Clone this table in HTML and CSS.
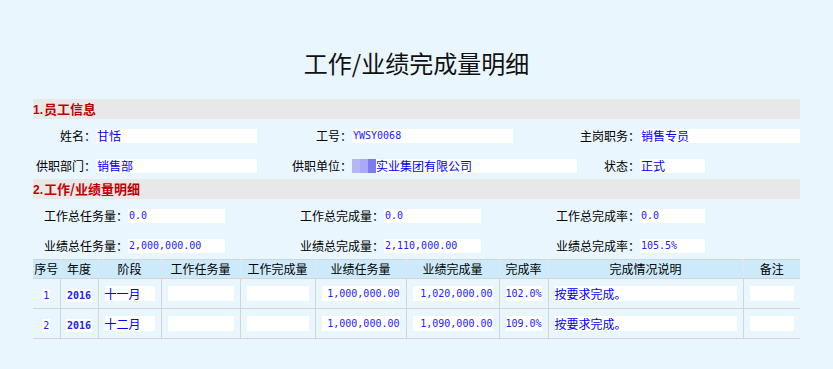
FILE: index.html
```html
<!DOCTYPE html>
<html lang="zh-CN">
<head>
<meta charset="utf-8">
<title>工作/业绩完成量明细</title>
<link rel="stylesheet" href="styles.css">
</head>
<body>
<div class="page">
  <h1 class="title">工作/业绩完成量明细</h1>

  <div class="bar"><span class="num">1.</span>员工信息</div>
  <div class="row">
    <div class="lbl w63">姓名：</div><div class="val w161 cjk">甘恬</div>
    <div class="lbl w95">工号：</div><div class="val w161 mono">YWSY0068</div>
    <div class="lbl w127">主岗职务：</div><div class="val w160 cjk">销售专员</div>
  </div>
  <div class="row">
    <div class="lbl w63">供职部门：</div><div class="val w161 cjk">销售部</div>
    <div class="lbl w95">供职单位：</div><div class="val w225 cjk"><span class="blur"></span>实业集团有限公司</div>
    <div class="lbl w63">状态：</div><div class="val w65 cjk">正式</div>
  </div>

  <div class="bar"><span class="num">2.</span>工作/业绩量明细</div>
  <div class="row">
    <div class="lbl w95">工作总任务量：</div><div class="val w97 mono">0.0</div>
    <div class="lbl w159">工作总完成量：</div><div class="val w97 mono">0.0</div>
    <div class="lbl w159">工作总完成率：</div><div class="val w65 mono">0.0</div>
  </div>
  <div class="row">
    <div class="lbl w95">业绩总任务量：</div><div class="val w97 mono">2,000,000.00</div>
    <div class="lbl w159">业绩总完成量：</div><div class="val w97 mono">2,110,000.00</div>
    <div class="lbl w159">业绩总完成率：</div><div class="val w65 mono">105.5%</div>
  </div>

  <table class="grid">
    <colgroup>
      <col class="c1"><col class="c2"><col class="c3"><col class="c4"><col class="c5">
      <col class="c6"><col class="c7"><col class="c8"><col class="c9"><col class="c10">
    </colgroup>
    <thead>
      <tr>
        <th>序号</th><th>年度</th><th>阶段</th><th>工作任务量</th><th>工作完成量</th>
        <th>业绩任务量</th><th>业绩完成量</th><th>完成率</th><th>完成情况说明</th><th>备注</th>
      </tr>
    </thead>
    <tbody>
      <tr>
        <td class="center"><span class="tag mono">1</span></td>
        <td class="center"><span class="tag mono bold">2016</span></td>
        <td><div class="box cjk">十一月</div></td>
        <td><div class="box"></div></td>
        <td><div class="box"></div></td>
        <td><div class="box mono right">1,000,000.00</div></td>
        <td><div class="box mono right">1,020,000.00</div></td>
        <td><div class="box mono right">102.0%</div></td>
        <td><div class="box cjk">按要求完成。</div></td>
        <td><div class="box"></div></td>
      </tr>
      <tr>
        <td class="center"><span class="tag mono">2</span></td>
        <td class="center"><span class="tag mono bold">2016</span></td>
        <td><div class="box cjk">十二月</div></td>
        <td><div class="box"></div></td>
        <td><div class="box"></div></td>
        <td><div class="box mono right">1,000,000.00</div></td>
        <td><div class="box mono right">1,090,000.00</div></td>
        <td><div class="box mono right">109.0%</div></td>
        <td><div class="box cjk">按要求完成。</div></td>
        <td><div class="box"></div></td>
      </tr>
    </tbody>
  </table>
</div>
</body>
</html>
```

FILE: styles.css
```css
html, body {
  margin: 0;
  padding: 0;
  background: #e9f6fd;
}
body {
  font-family: "Noto Sans CJK SC", "Noto Sans", sans-serif;
  font-size: 12px;
  color: #000;
}
.page {
  width: 767px;
  margin-left: 33px;
  padding-top: 48px;
}
.title {
  margin: 0 0 21px 0;
  height: 30px;
  line-height: 30px;
  font-size: 24px;
  font-weight: normal;
  text-align: center;
  color: #111;
}
.bar {
  height: 20px;
  line-height: 20px;
  background: #e8e8e8;
  color: #c00000;
  font-size: 13px;
  font-weight: bold;
}
.bar .num {
  font-family: "Liberation Sans", sans-serif;
  font-size: 12px;
  margin-right: 1px;
}
.row {
  display: flex;
  align-items: flex-start;
  height: 30px;
  box-sizing: border-box;
  padding-top: 10px;
}
.lbl {
  text-align: right;
  height: 14px;
  line-height: 14px;
  white-space: nowrap;
}
.val {
  height: 14px;
  line-height: 14px;
  background: #fff;
  color: #0000ff;
  padding-left: 1px;
  box-sizing: border-box;
  white-space: nowrap;
  display: flex;
  align-items: center;
}
.w63 { width: 63px; }
.w65 { width: 65px; }
.w95 { width: 95px; }
.w97 { width: 97px; }
.w127 { width: 127px; }
.w159 { width: 159px; }
.w160 { width: 160px; }
.w161 { width: 161px; }
.w225 { width: 225px; }
.mono {
  font-family: "DejaVu Sans Mono", monospace;
  font-size: 10px;
  color: #2020ff;
}
.cjk {
  font-family: "Noto Sans CJK SC", sans-serif;
  font-size: 12px;
  color: #0000ff;
}
.bold { font-weight: bold; }
.blur {
  display: inline-block;
  flex: none;
  width: 24px;
  height: 14px;
  background:
    linear-gradient(to right, #b6b6f7 0, #b6b6f7 8px, #a9a9f6 8px, #a9a9f6 16px, #7c7cf0 16px, #7c7cf0 24px);
  margin-left: -1px;
}
.grid {
  width: 767px;
  table-layout: fixed;
  border-collapse: collapse;
  border-top: 1px solid #d4d4d4;
}
.c1 { width: 27px; }
.c2 { width: 38px; }
.c3 { width: 63px; }
.c4 { width: 79px; }
.c5 { width: 75px; }
.c6 { width: 91px; }
.c7 { width: 93px; }
.c8 { width: 49px; }
.c9 { width: 195px; }
.c10 { width: 57px; }
.grid th {
  height: 18px;
  padding: 0;
  background: #cdeafb;
  font-weight: normal;
  font-size: 12px;
  line-height: 18px;
  text-align: center;
  border-left: 1px solid #dde8ee;
  border-bottom: 1px solid #d4d4d4;
  white-space: nowrap;
}
.grid td {
  height: 29px;
  padding: 0 6px;
  border-left: 1px solid #d4d4d4;
  border-bottom: 1px solid #d4d4d4;
  background: #eaf6fd;
}
.grid th:first-child, .grid td:first-child { border-left: none; }
.grid td.center { text-align: center; padding: 0; }
.tag {
  display: inline-block;
  background: #fff;
  line-height: 13px;
  padding: 0 1px;
}
.box {
  height: 15px;
  line-height: 15px;
  background: #fff;
  white-space: nowrap;
}
.box.right { text-align: right; }
```
